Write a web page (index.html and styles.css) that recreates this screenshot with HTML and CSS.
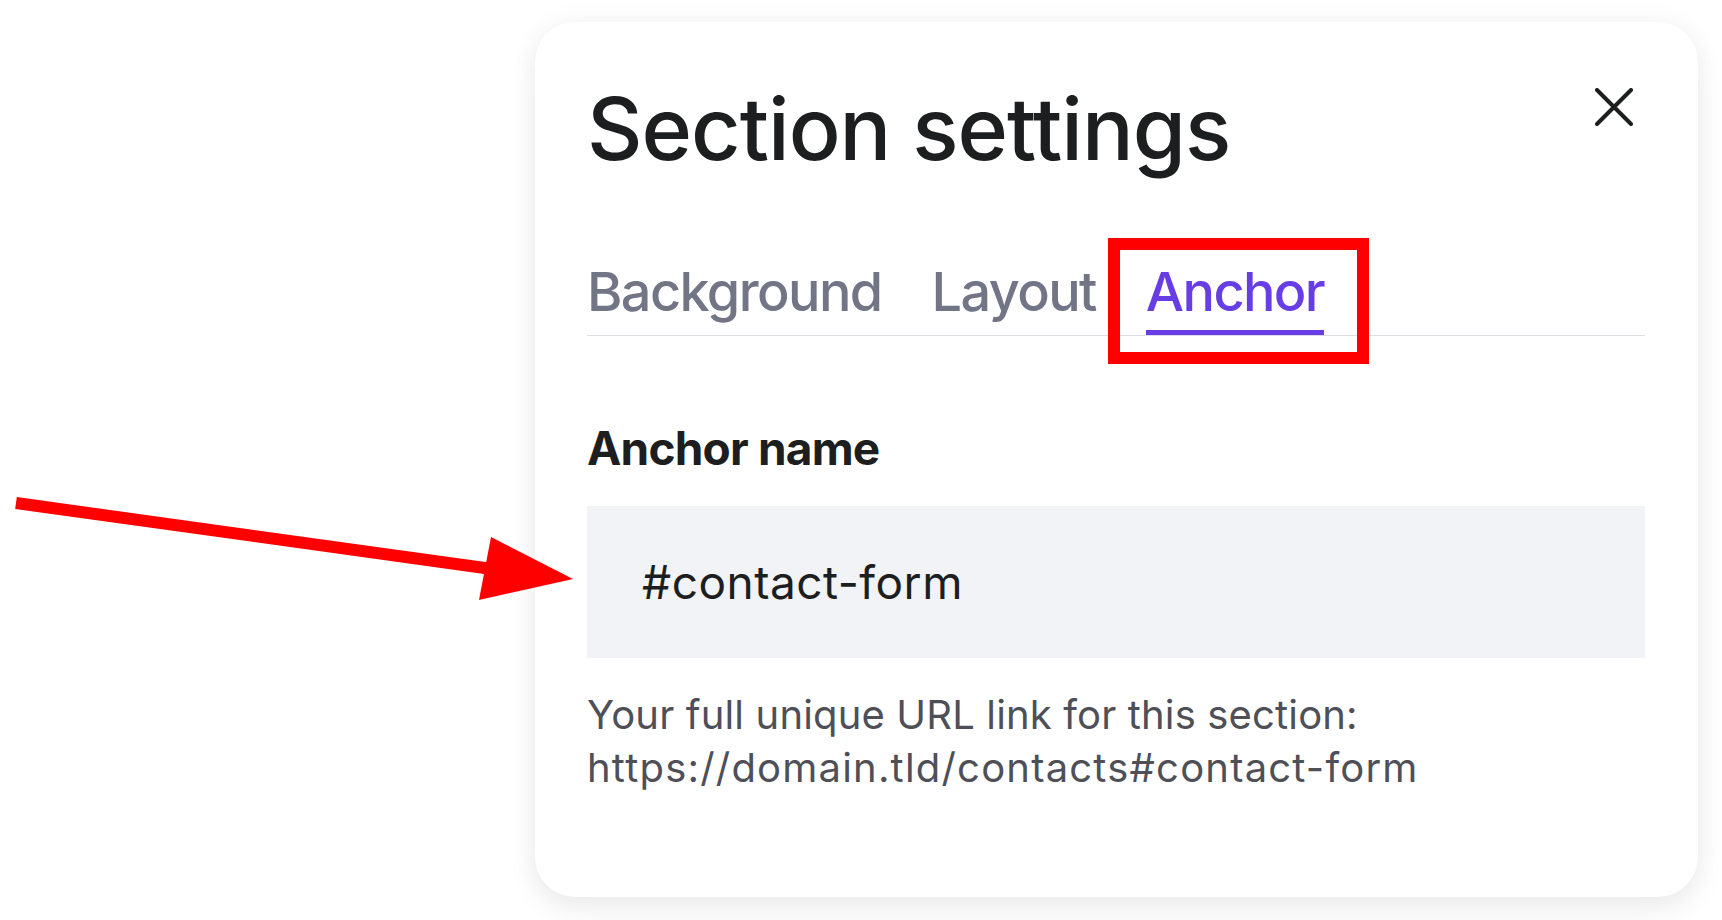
FILE: index.html
```html
<!DOCTYPE html>
<html lang="en">
<head>
<meta charset="utf-8">
<title>Section settings</title>
<link rel="stylesheet" href="styles.css">
</head>
<body>
<div class="stage">
  <section class="panel">
    <header class="panel-head">
      <h1 class="panel-title">Section settings</h1>
      <button class="close" aria-label="Close">
        <svg width="38" height="38" viewBox="0 0 38 38"><path d="M2 2 L36 36 M36 2 L2 36" stroke="#1d1e20" stroke-width="4" stroke-linecap="round" fill="none"/></svg>
      </button>
    </header>
    <nav class="tabs">
      <span class="tab">Background</span>
      <span class="tab">Layout</span>
      <span class="tab tab-active">Anchor</span>
    </nav>
    <div class="field">
      <label class="field-label">Anchor name</label>
      <div class="field-input">#contact-form</div>
      <p class="field-help">Your full unique URL link for this section:<br><span class="field-url">https://domain.tld/contacts#contact-form</span></p>
    </div>
  </section>
  <svg class="arrow" width="620" height="680" viewBox="0 0 620 680">
    <line x1="16" y1="503" x2="492" y2="569" stroke="#ff0000" stroke-width="12"/>
    <polygon points="491,537 573,579 479,600" fill="#ff0000"/>
  </svg>
</div>
</body>
</html>
```

FILE: styles.css
```css
* { box-sizing: border-box; }
html, body { margin: 0; padding: 0; background: #ffffff; }
body {
  font-family: Inter, "Noto Sans", sans-serif;
  width: 1722px;
  height: 920px;
  overflow: hidden;
}
.stage {
  position: relative;
  padding: 22px 0 0 535px;
  height: 920px;
}
.panel {
  width: 1163px;
  height: 875px;
  background: #ffffff;
  border-radius: 40px;
  box-shadow: 0 0 24px 4px rgba(0,0,0,0.035), 0 14px 30px rgba(0,0,0,0.06);
  padding: 64px 53px 0 52px;
  display: flex;
  flex-direction: column;
}
.panel-head {
  display: flex;
  justify-content: space-between;
  align-items: flex-start;
}
.panel-title {
  margin: 0;
  font-size: 86px;
  line-height: 1;
  font-weight: 500;
  color: #1d1e20;
  letter-spacing: -1px;
}
.close {
  border: 0;
  background: none;
  padding: 0;
  margin: 2px 12px 0 0;
  width: 38px;
  height: 38px;
  display: flex;
}
.tabs {
  margin-top: 88px;
  display: flex;
  gap: 50px;
  border-bottom: 1px solid #dcdde3;
}
.tab {
  position: relative;
  font-size: 54px;
  line-height: 64px;
  font-weight: 500;
  color: #727586;
  letter-spacing: -1.6px;
  padding-bottom: 6px;
  border-bottom: 5px solid transparent;
}
.tab-active {
  color: #673de6;
  border-bottom-color: #673de6;
}
.tab-active::before {
  content: "";
  position: absolute;
  left: -38px;
  right: -45px;
  top: -22px;
  bottom: -34px;
  border: 12px solid #ff0000;
}
.field {
  margin-top: 85px;
  display: flex;
  flex-direction: column;
}
.field-label {
  font-size: 46px;
  line-height: 55px;
  font-weight: 700;
  color: #1d1e20;
  letter-spacing: -0.8px;
}
.field-input {
  margin-top: 30px;
  height: 152px;
  background: #f2f3f6;
  display: flex;
  align-items: center;
  padding-left: 55px;
  font-size: 46px;
  line-height: 55px;
  color: #1d1e20;
  letter-spacing: 0.5px;
}
.field-help {
  margin: 30px 0 0;
  font-size: 40px;
  line-height: 53px;
  color: #4f4f58;
  letter-spacing: 0.15px;
}
.field-url {
  letter-spacing: 1.2px;
}
.arrow {
  position: absolute;
  left: 0;
  top: 0;
}
```
